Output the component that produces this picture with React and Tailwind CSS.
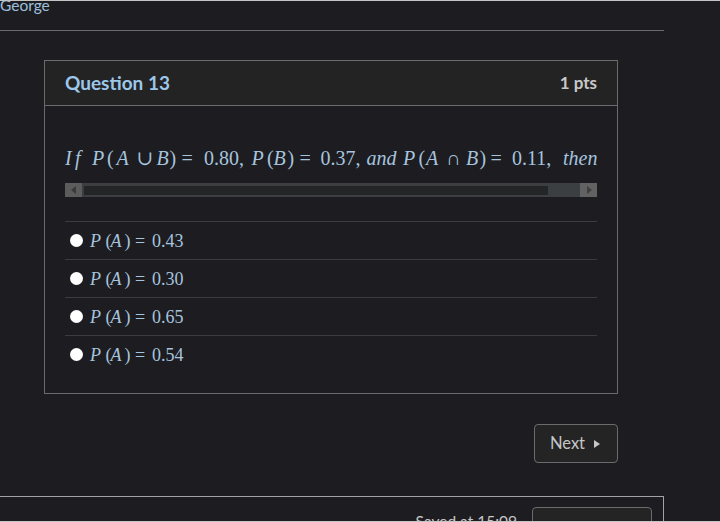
import React from "react";

const serif = { fontFamily: '"Liberation Serif", "DejaVu Serif", serif' };

function T({ w, it, children, pl }) {
  return (
    <span className={`inline-block ${w} ${pl || ""} ${it ? "italic" : ""}`}>{children}</span>
  );
}

function Radio() {
  return <span className="inline-block w-[13px] h-[13px] rounded-full bg-white shrink-0" />;
}

function Answer({ value }) {
  return (
    <div className="flex items-center h-[38px] border-t border-[#3c3c3e] pl-[5px]">
      <Radio />
      <span className="ml-[7px] text-[18px] leading-[24px] text-[#a6c4de] whitespace-nowrap" style={serif}>
        <T w="w-[15.5px]" it>P</T>
        <T w="w-[5px]">(</T>
        <T w="w-[14px]" it>A</T>
        <T w="w-[10.5px]">)</T>
        <T w="w-[17px]">=</T>
        <T w="w-[34px]">{value}</T>
      </span>
    </div>
  );
}

export default function App() {
  return (
    <div className="w-[720px] h-[522px] overflow-hidden bg-[#1d1c21] border-t border-b border-[#c4c4c4]" style={{ fontFamily: 'Lato, "Open Sans", sans-serif' }}>
      <div className="w-[664px]">
        <div className="h-[29px] overflow-hidden">
          <div className="-mt-[6px] text-[15.5px] leading-[20px] text-[#9dc0dd]">George</div>
        </div>
        <div className="border-b border-[#6b6b6d]" />
        <div className="ml-[44px] w-[574px] mt-[29px]">
          <div className="border border-[#6b6b6d]">
            <div className="h-[45px] bg-[#232323] border-b border-[#6b6b6d] flex items-center justify-between px-[20px]">
              <span className="text-[19px] font-bold text-[#9cc7ea]">Question 13</span>
              <span className="text-[17px] font-bold text-[#c9c9c9]">1 pts</span>
            </div>
            <div className="px-[20px] pt-[40px] pb-[20px]">
              <div className="overflow-hidden whitespace-nowrap text-[20px] leading-[24px] text-[#a6c4de]" style={serif}>
                <T w="w-[10px]" it>I</T>
                <T w="w-[17px]" it>f</T>
                <T w="w-[15px]" it>P</T>
                <T w="w-[9.5px]">(</T>
                <T w="w-[20px]" it>A</T>
                <T w="w-[20px]">∪</T>
                <T w="w-[13px]" it>B</T>
                <T w="w-[9px]">)</T>
                <T w="w-[25.5px]" pl="pl-[3px]">=</T>
                <T w="w-[47.5px]">0.80,</T>
                <T w="w-[15.5px]" it>P</T>
                <T w="w-[6.5px]">(</T>
                <T w="w-[14px]" it>B</T>
                <T w="w-[10px]">)</T>
                <T w="w-[23px]" pl="pl-[2px]">=</T>
                <T w="w-[46px]">0.37,</T>
                <T w="w-[36.5px]" it>and</T>
                <T w="w-[15.5px]" it>P</T>
                <T w="w-[7.5px]">(</T>
                <T w="w-[20px]" it>A</T>
                <T w="w-[20px]">∩</T>
                <T w="w-[13.5px]" it>B</T>
                <T w="w-[8px]">)</T>
                <T w="w-[24.5px]" pl="pl-[3px]">=</T>
                <T w="w-[51px]">0.11,</T>
                <T w="w-[90px]" it>then P(A) is</T>
              </div>
              <div className="mt-[13px] h-[14px] flex bg-[#3c3f42]">
                <div className="w-[17px] h-full bg-[#5c5c5c] flex items-center justify-center">
                  <svg width="8" height="8" viewBox="0 0 8 8"><polygon points="6,0 6,8 1,4" fill="#3a3a3a" /></svg>
                </div>
                <div className="flex-1 flex items-center px-[2px]">
                  <div className="w-[464px] h-[9px] bg-[#242527]" />
                </div>
                <div className="w-[17px] h-full bg-[#626262] flex items-center justify-center">
                  <svg width="8" height="8" viewBox="0 0 8 8"><polygon points="2,0 2,8 7,4" fill="#404040" /></svg>
                </div>
              </div>
              <div className="mt-[24px]">
                <Answer value="0.43" />
                <Answer value="0.30" />
                <Answer value="0.65" />
                <Answer value="0.54" />
              </div>
            </div>
          </div>
          <div className="flex justify-end mt-[30px]">
            <div className="w-[84px] h-[39px] border border-[#6b6b6d] rounded-[4px] bg-[#242424] flex items-center justify-center gap-[9px] text-[16.5px] text-[#c6c6c6] pr-[2px]">
              <span>Next</span>
              <svg width="6" height="8" viewBox="0 0 6 8"><polygon points="0,0 6,4 0,8" fill="#c6c6c6" /></svg>
            </div>
          </div>
        </div>
        <div className="mt-[33px] h-[40px] border-t border-r border-[#a3a3a3] flex items-start justify-end pr-[11px]">
          <span className="mt-[14px] mr-[15px] text-[15.5px] leading-[20px] text-[#c6c6c6]">Saved at 15:09</span>
          <div className="mt-[10px] w-[120px] h-[38px] border border-[#6b6b6d] rounded-[4px] bg-[#242424] flex items-center justify-center text-[16px] text-[#c6c6c6]">Submit Quiz</div>
        </div>
      </div>
    </div>
  );
}
